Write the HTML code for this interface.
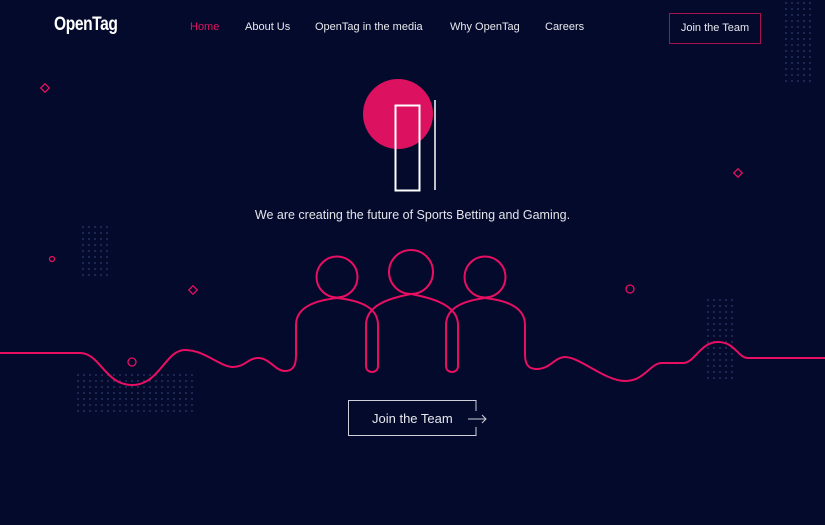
<!DOCTYPE html>
<html><head><meta charset="utf-8"><style>
html,body{margin:0;padding:0}
body{width:825px;height:525px;background:#030a2c;position:relative;overflow:hidden;font-family:"Liberation Sans",sans-serif;color:#e8e8ee}
.a{position:absolute}
.dots{position:absolute;background-image:radial-gradient(circle,#252f5e 0.8px,transparent 1.1px);background-size:6px 6px}
.nav{font-size:11px;top:21px;white-space:nowrap}
</style></head><body>
<div class="dots" style="left:80px;top:224px;width:32px;height:52px"></div>
<div class="dots" style="left:75px;top:372px;width:122px;height:42px"></div>
<div class="dots" style="left:705px;top:297px;width:32px;height:82px"></div>
<div class="dots" style="left:783px;top:0px;width:30px;height:82px"></div>

<div class="a" style="left:54px;top:14px;font-size:19px;font-weight:bold;letter-spacing:-0.5px;transform:scaleX(0.82);transform-origin:left;color:#fff">OpenTag</div>
<div class="a nav" style="left:190px;color:#e0135f">Home</div>
<div class="a nav" style="left:245px">About Us</div>
<div class="a nav" style="left:315px">OpenTag in the media</div>
<div class="a nav" style="left:450px">Why OpenTag</div>
<div class="a nav" style="left:545px">Careers</div>
<div class="a" style="left:669px;top:13px;width:90px;height:29px;border:1px solid #a8114f;font-size:11px;line-height:29px;text-align:center">Join the Team</div>

<div class="a" style="left:0;top:208px;width:825px;text-align:center;font-size:12.5px;color:#e4e4ea">We are creating the future of Sports Betting and Gaming.</div>

<div class="a" style="left:348px;top:400px;height:36px;border:1px solid #cfd0da;border-right:none;font-size:13px;line-height:35px;padding-left:23px;box-sizing:border-box;width:128px">Join the Team</div>

<svg class="a" style="left:0;top:0" width="825" height="525" viewBox="0 0 825 525">
<circle cx="398" cy="114" r="35" fill="#dc1260"/>
<rect x="395.5" y="105.5" width="24" height="85" fill="none" stroke="#fff" stroke-width="2"/>
<line x1="435" y1="100" x2="435" y2="190" stroke="#fff" stroke-width="1.5"/>
<line x1="476" y1="400" x2="476" y2="411" stroke="#cfd0da" stroke-width="1"/>
<line x1="476" y1="427" x2="476" y2="436" stroke="#cfd0da" stroke-width="1"/>
<path d="M468 419 H486 M482 415 L486 419 L482 423" fill="none" stroke="#cfd0da" stroke-width="1"/>
<g fill="none" stroke="#e80f62" stroke-width="2">
<circle cx="337" cy="277" r="20.5"/>
<circle cx="411" cy="272" r="22"/>
<circle cx="485" cy="277" r="20.5"/>
<path d="M0 353 L80 353 C100 353 105 385 132 385 C160 385 165 350 185 350 C205 350 220 367 233 367 C245 367 248 358 258 358 C270 358 275 371 285 371 C295 371 296 362 296 355 L296 325 C296 305 320 300 337 298 C355 300 378 305 378 325 L378 366 C378 374 366 374 366 366 L366 325 C366 305 390 298 411 294 C432 298 458 305 458 325 L458 366 C458 374 446 374 446 366 L446 325 C446 305 470 300 485 298 C502 300 525 305 525 325 L525 355 C525 368 532 369 537 369 C550 369 555 357 565 357 C580 357 605 381 625 381 C645 381 650 363 662 363 L683 363 C695 363 700 342 718 342 C735 342 738 358 748 358 L825 358"/>
</g>
<g fill="none" stroke="#e80f62" stroke-width="1.3">
<rect x="42" y="85" width="6" height="6" transform="rotate(45 45 88)"/>
<rect x="735" y="170" width="6" height="6" transform="rotate(45 738 173)"/>
<rect x="190" y="287" width="6" height="6" transform="rotate(45 193 290)"/>
<circle cx="52" cy="259" r="2.5"/>
<circle cx="630" cy="289" r="4"/>
<circle cx="132" cy="362" r="4"/>
</g>
</svg>
</body></html>
